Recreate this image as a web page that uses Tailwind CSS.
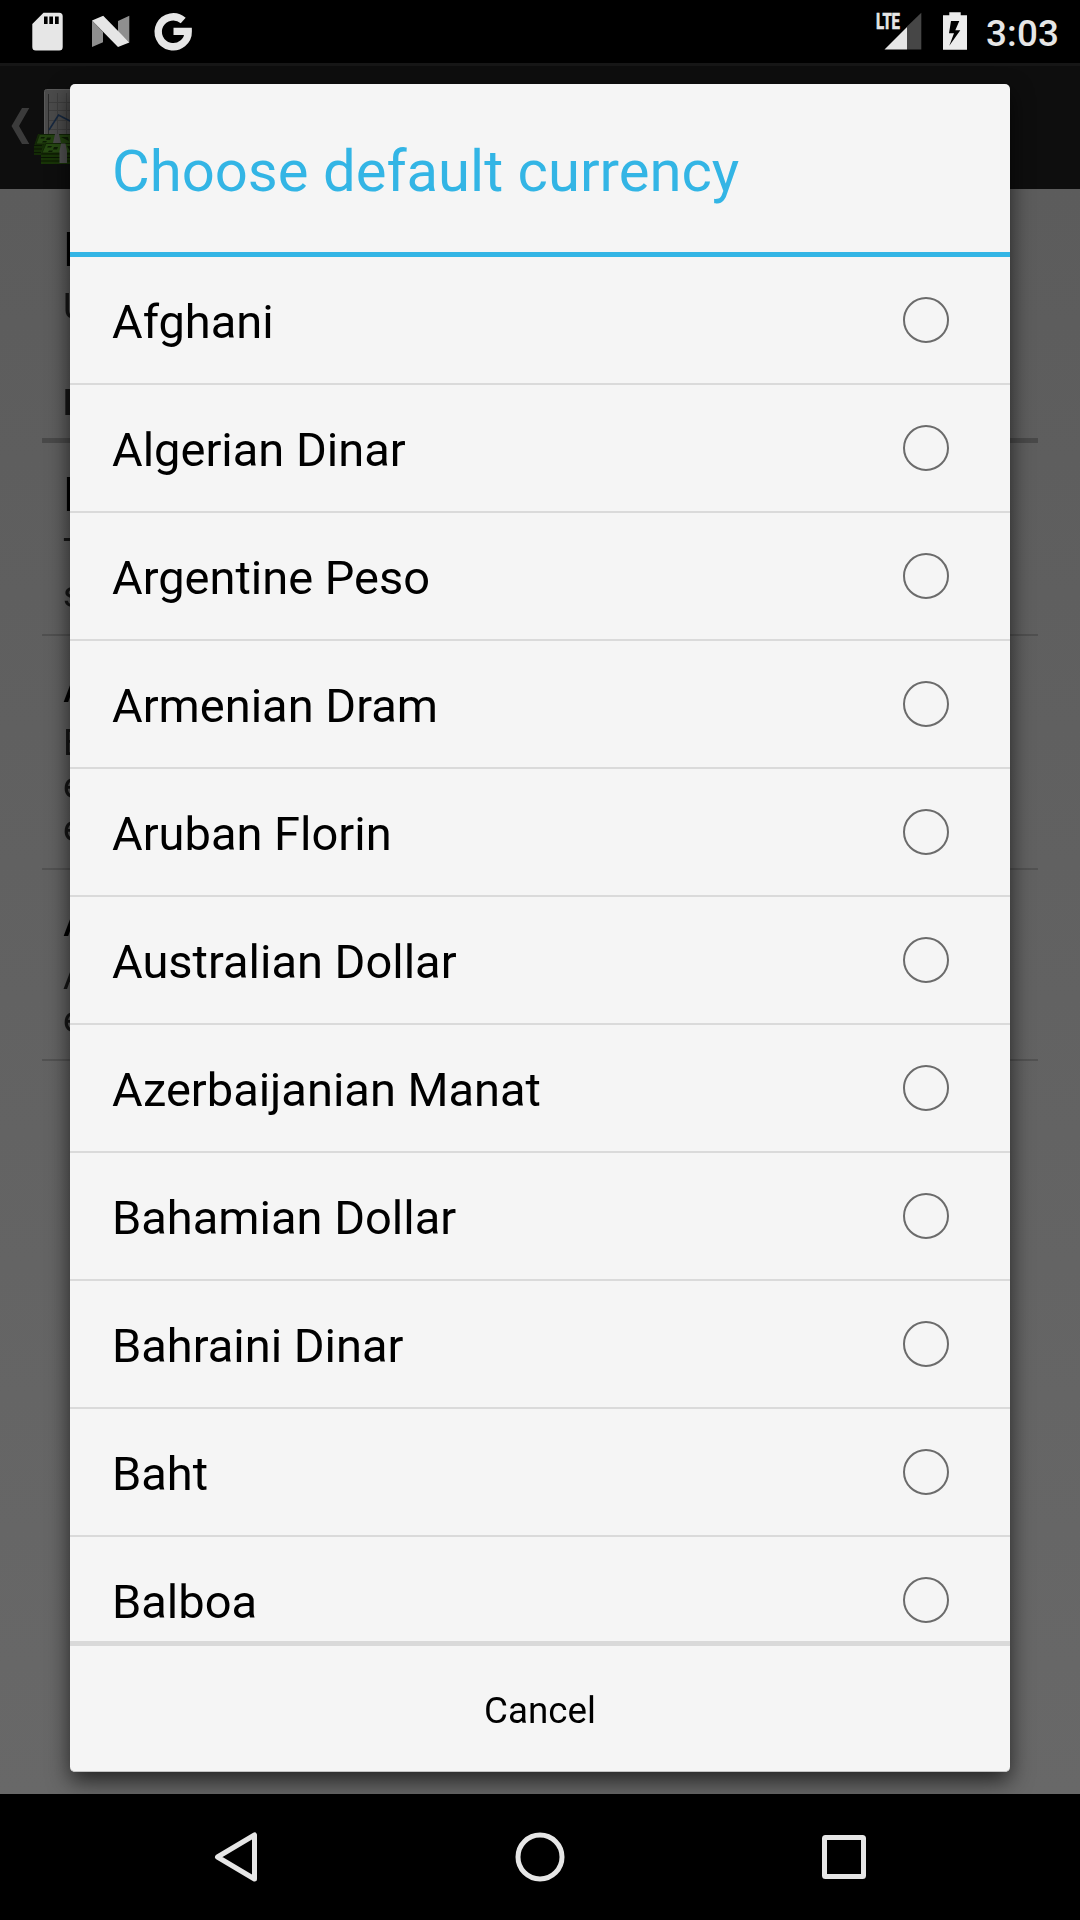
<!DOCTYPE html>
<html lang="en">
<head>
<meta charset="utf-8">
<title>Choose default currency</title>
<script src="https://cdn.jsdelivr.net/npm/@tailwindcss/browser@4"></script>
</head>
<body class="w-[1080px] h-[1920px] overflow-hidden bg-black font-[Roboto,sans-serif]">
<div class="relative w-[1080px] h-[1920px] flex flex-col overflow-hidden">

  <!-- Status bar -->
  <header class="h-[63px] shrink-0 bg-black">
    <svg width="1080" height="63" viewBox="0 0 1080 63" class="block">
      <path fill="#e6e6e6" fill-rule="evenodd" d="M43.5 12.7H59.2Q62.7 12.7 62.7 16.2V47Q62.7 50.5 59.2 50.5H35.8Q32.3 50.5 32.3 47V24ZM44 16.6V24H47.6V16.6ZM49.3 16.6V24H53V16.6ZM55 16.6V24H58.7V16.6Z"/>
      <path fill="#8f8f8f" d="M92 20.5L103 32V42.3L92 47ZM118 21L129.3 15.8V42.5L118 32Z"/>
      <path fill="#e6e6e6" d="M92 20.5L103.2 15.8L129.3 42.5L118 47Z"/>
      <path fill="none" stroke="#e6e6e6" stroke-width="7.4" d="M183.2 20.6A15 15 0 1 0 188.2 31.4H173.5"/>
      <text x="876" y="29" fill="#e6e6e6" stroke="#e6e6e6" stroke-width="0.7" font-family="Roboto" font-weight="700" font-size="21.5" textLength="24" lengthAdjust="spacingAndGlyphs">LTE</text>
      <path fill="#464646" d="M907 26.5L921.3 12.8V49.5H907Z"/>
      <path fill="#e6e6e6" d="M884.5 49.5L907 27V49.5Z"/>
      <path fill="#ececec" fill-rule="evenodd" d="M949.3 12.3H960.7V15.3H967V49.7H943V15.3H949.3ZM951 21L949 33.3H954L949.3 45.7L960.3 30.3H955.3L959.3 21Z"/>
      <text x="986" y="46" fill="#e6e6e6" font-family="Roboto" font-weight="500" font-size="36.75" textLength="73" lengthAdjust="spacing">3:03</text>
    </svg>
  </header>

  <!-- Dimmed action bar -->
  <div class="h-[126px] shrink-0 bg-[#0e0e0e] border-t-[3px] border-[#161616]">
    <svg width="120" height="120" viewBox="0 66 120 120" class="block">
      <path fill="#3b3b3b" d="M22 108H29.3L19 126L29.3 144H22L11.5 126Z"/>
      <rect x="44.500" y="89.500" width="50" height="50" rx="2" fill="#4b4b4b" stroke="#5a5a5a"/>
      <path stroke="#3e3e3e" fill="none" d="M57.500 93V136M66.500 93V136M49 102.500H80M49 110.500H80M49 120.500H80M49 129.500H80"/>
      <path stroke="#2a2a2a" fill="none" d="M48.500 94V134"/>
      <path stroke="#17283f" stroke-width="1.600" fill="none" d="M49 130L58.500 115L72 122"/>
      <path fill="#142b06" d="M38 134H80V155H34V146Z"/>
      <path fill="#234210" stroke="#0f2006" stroke-width="0.800" d="M39.500 134.500H80L77 144H36Z"/>
      <path stroke="#0a1503" stroke-width="1.200" fill="none" d="M34 145.500H42M34 149H42M34 152.500H42"/>
      <path fill="#0d1c05" d="M41 137H45L44 138.500H40.500ZM47 137.500H51L50 140H46ZM43 141H47L46 142.500H42ZM61 137L69 141L68 137Z"/>
      <path fill="#484848" d="M55 134H59L61 143H53Z"/>
      <path fill="#183407" d="M45 143H85V164H41V152Z"/>
      <path fill="#264812" stroke="#0f2006" stroke-width="0.800" d="M46 143.500H85V153H42Z"/>
      <path stroke="#0a1503" stroke-width="1.200" fill="none" d="M41 154H80M41 157.500H80M41 161H80"/>
      <path fill="#0d1c05" d="M48 146H52L51 147.500H47ZM54 147H58L57 149.500H53ZM49 150.500H53L52 152H48ZM67 146H70V151Z"/>
      <path fill="#505050" d="M61 143.500H65.500L67 151V163H59.500V151Z"/>
    </svg>
  </div>

  <!-- Dimmed preferences screen -->
  <main class="h-[1605px] shrink-0 flex flex-col px-[42px] pt-[33px] bg-linear-to-b from-[#5c5c5c] to-[#686868] text-[36.75px] leading-[43px] text-[#161616]">
    <section class="will-change-transform pl-[21px] h-[159px]">
      <h2 class="text-[47.25px] leading-[56px] text-black">L</h2>
      <p class="pt-[7px]">U</p>
    </section>
    <h3 class="will-change-transform pl-[21px] h-[57px] font-bold">D</h3>
    <div class="h-[5px] bg-[#494949]"></div>
    <section class="will-change-transform pl-[21px] pt-6 h-[193px] border-b-2 border-[#505050]">
      <h2 class="text-[47.25px] leading-[56px] text-black">D</h2>
      <p class="pt-[7px]">T<br>s</p>
    </section>
    <section class="will-change-transform pl-[21px] pt-[22px] h-[234px] border-b-2 border-[#525252]">
      <h2 class="text-[47.25px] leading-[56px] text-black">A</h2>
      <p class="pt-[7px]">E<br>e<br>e</p>
    </section>
    <section class="will-change-transform pl-[21px] pt-[22px] h-[191px] border-b-2 border-[#525252]">
      <h2 class="text-[47.25px] leading-[56px] text-black">A</h2>
      <p class="pt-[7px]">A<br>e</p>
    </section>
  </main>

  <!-- Navigation bar -->
  <nav class="h-[126px] shrink-0 bg-black">
    <svg width="1080" height="126" viewBox="0 1794 1080 126" class="block" fill="none" stroke="#e6e6e6" stroke-width="5" stroke-linejoin="round">
      <path d="M217.500 1857L254.500 1835V1879Z"/>
      <circle cx="540" cy="1857" r="22"/>
      <rect x="824.500" y="1837.500" width="39" height="39" rx="1"/>
    </svg>
  </nav>

  <!-- Currency dialog -->
  <div role="dialog" class="will-change-transform absolute left-[70px] top-[84px] w-[940px] h-[1688px] flex flex-col rounded-[5px] bg-[#f5f5f5] shadow-[0_9px_22px_rgba(0,0,0,0.66)]">
    <h1 class="h-[168px] shrink-0 pl-[42px] pt-[6px] flex items-center text-[58px] text-[#33b5e5]">Choose default currency</h1>
    <div class="h-[5px] shrink-0 bg-[#33b5e5]"></div>
    <ul id="list" class="h-[1384px] shrink-0 overflow-hidden text-[47px] text-black"></ul>
    <div class="h-[5px] shrink-0 bg-[#d9d9d9]"></div>
    <button class="h-[126px] shrink-0 pt-[5px] rounded-b-[5px] border-b border-[#c4c4c4] text-[36.75px] text-black">Cancel</button>
  </div>
</div>
<script>
  const names = ["Afghani", "Algerian Dinar", "Argentine Peso", "Armenian Dram", "Aruban Florin", "Australian Dollar", "Azerbaijanian Manat", "Bahamian Dollar", "Bahraini Dinar", "Baht", "Balboa"];
  document.getElementById("list").innerHTML = names.map(n =>
    `<li class="h-[128px] flex items-center justify-between pl-[42px] pr-[61px] border-b-2 border-[#dadada]"><span class="pt-[5px]">${n}</span><i class="block size-[46px] rounded-full border-2 border-[#6b6b6b]"></i></li>`).join("");
</script>
</body>
</html>
